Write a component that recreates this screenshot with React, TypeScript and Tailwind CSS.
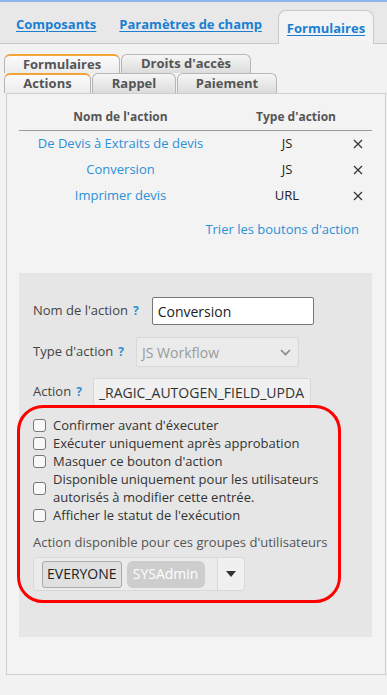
import React from "react";

const rows = [
  { name: "De Devis à Extraits de devis", type: "JS" },
  { name: "Conversion", type: "JS" },
  { name: "Imprimer devis", type: "URL" },
];

const options = [
  "Confirmer avant d'éxecuter",
  "Exécuter uniquement après approbation",
  "Masquer ce bouton d'action",
  "Disponible uniquement pour les utilisateurs autorisés à modifier cette entrée.",
  "Afficher le statut de l'exécution",
];

function SubTab({ label, active, w }: { label: string; active?: boolean; w: string }) {
  return (
    <div
      className={`${w} h-full flex items-center justify-center rounded-t-[6px] border border-b-0 border-[#b5b5b5] text-[13px] font-bold text-[#555] ${
        active
          ? "border-t-2 border-t-[#f2a33a] bg-gradient-to-b from-[#fbfbfb] to-[#ececec]"
          : "bg-gradient-to-b from-[#f6f6f6] to-[#dcdcdc]"
      }`}
    >
      {label}
    </div>
  );
}

function Help() {
  return <span className="ml-[5px] text-[#2b8fd4] font-bold text-[12px]">?</span>;
}

function Box() {
  return <span className="shrink-0 w-[13px] h-[13px] rounded-[3px] border border-[#777] bg-[#f8f8f8]" />;
}

export default function App() {
  return (
    <div className="w-[387px] h-[695px] overflow-hidden bg-[#f2f2f2] font-['Open_Sans',sans-serif] text-[#333]">
      <div className="h-[2px] bg-[#8db6ee]" />

      {/* top tabs */}
      <div className="h-[42px] flex items-end bg-[#e8e8e8] border-b border-[#c9c9c9] text-[13px] font-bold">
        <a className="ml-[16px] mb-[9px] text-[#1a7fd2] underline underline-offset-2">Composants</a>
        <a className="ml-[23px] mb-[9px] text-[#1a7fd2] underline underline-offset-2">Paramètres de champ</a>
        <div className="ml-[16px] mb-[-1px] w-[96px] h-[34px] flex items-center justify-center rounded-t-[8px] border border-b-0 border-[#c9c9c9] bg-[#f3f3f3]">
          <a className="mt-[2px] text-[#1a7fd2] underline underline-offset-2">Formulaires</a>
        </div>
      </div>

      {/* sub tabs */}
      <div className="mt-[10px] ml-[4px] h-[19px] flex gap-[1px]">
        <SubTab label="Formulaires" active w="w-[116px]" />
        <SubTab label="Droits d'accès" w="w-[130px]" />
      </div>
      <div className="ml-[4px] h-[20px] flex gap-[1px]">
        <SubTab label="Actions" active w="w-[87px]" />
        <SubTab label="Rappel" w="w-[84px]" />
        <SubTab label="Paiement" w="w-[100px]" />
      </div>

      <div className="ml-[6px] w-[380px] h-[582px] border border-[#cfcfcf] bg-[#f3f3f3] pl-[12px]">
        {/* table */}
        <div className="w-[353px]">
          <div className="mt-[14px] pb-[4px] flex leading-[18px] text-[12px] font-bold text-[#555] border-b border-[#9a9a9a]">
            <div className="w-[203px] text-center">Nom de l'action</div>
            <div className="w-[148px] text-center">Type d'action</div>
          </div>
          {rows.map((r) => (
            <div key={r.name} className="h-[26px] flex items-center text-[13px]">
              <div className="w-[203px] text-center text-[#2b90d6]">{r.name}</div>
              <div className="w-[130px] text-center text-[#222]">{r.type}</div>
              <div className="w-[12px] flex justify-center">
                <svg width="10" height="10" viewBox="0 0 10 10" stroke="#333" strokeWidth="1.2">
                  <path d="M1 1l8 8M9 1l-8 8" />
                </svg>
              </div>
            </div>
          ))}
          <div className="mt-[11px] leading-[18px] text-[13px] text-[#2b90d6] text-right pr-[13px]">
            Trier les boutons d'action
          </div>
        </div>

        {/* form */}
        <div className="mt-[35px] w-[353px] h-[364px] bg-[#e6e6e6] pt-[24px] text-[13px]">
          <div className="flex items-center pl-[14px] h-[28px]">
            <span className="text-[#444]">Nom de l'action</span>
            <Help />
            <div className="ml-[13px] w-[162px] h-[28px] flex items-center pl-[5px] bg-white border border-[#777] rounded-[2px] text-[14px] text-[#222]">
              Conversion
            </div>
          </div>
          <div className="mt-[12px] flex items-center pl-[14px] h-[30px]">
            <span className="text-[#444]">Type d'action</span>
            <Help />
            <div className="ml-[12px] w-[163px] h-[30px] flex items-center justify-between pl-[5px] pr-[7px] bg-[#ebebeb] border border-[#d8d8d8] rounded-[2px] text-[14px] text-[#9a9a9a]">
              <span>JS Workflow</span>
              <svg width="11" height="7" viewBox="0 0 11 7" fill="none" stroke="#888" strokeWidth="1.6">
                <path d="M1 1l4.5 4.5L10 1" />
              </svg>
            </div>
          </div>
          <div className="mt-[11px] flex items-center pl-[14px] h-[28px]">
            <span className="text-[#444]">Action</span>
            <Help />
            <div className="ml-[11px] w-[218px] h-[28px] overflow-hidden whitespace-nowrap flex items-center pl-[5px] bg-[#f0f0f0] border border-[#d8d8d8] rounded-[2px] text-[14px] text-[#333]">
              _RAGIC_AUTOGEN_FIELD_UPDA
            </div>
          </div>

          {/* highlighted group */}
          <div className="relative -mt-[1px] -ml-[2px] w-[324px] h-[198px] border-[3px] border-[#ff0000] rounded-[26px] pt-[8px] pl-[13px] leading-[18px]">
            {options.map((o) => (
              <div key={o} className="flex items-center gap-[7px]">
                <Box />
                <span className="text-[#333]">{o}</span>
              </div>
            ))}
            <div className="mt-[9px] text-[#555]">Action disponible pour ces groupes d'utilisateurs</div>
            <div className="mt-[6px] w-[212px] h-[34px] flex items-center bg-[#ebebeb] border border-[#d9d9d9] rounded-[4px]">
              <div className="ml-[8px] h-[27px] px-[4px] flex items-center border border-[#aaa] rounded-[3px] bg-[#e0e0e0] text-[14px] text-[#222]">
                EVERYONE
              </div>
              <div className="ml-[5px] h-[27px] w-[78px] flex items-center justify-center rounded-[6px] bg-[#cdcdcd] text-[14px] text-white">
                SYSAdmin
              </div>
              <div className="ml-auto h-full w-[27px] flex items-center justify-center border-l border-[#d9d9d9] bg-[#f0f0f0] rounded-r-[4px]">
                <svg width="10" height="6" viewBox="0 0 10 6">
                  <path d="M0 0h10L5 6z" fill="#333" />
                </svg>
              </div>
            </div>
          </div>
        </div>
      </div>
    </div>
  );
}
